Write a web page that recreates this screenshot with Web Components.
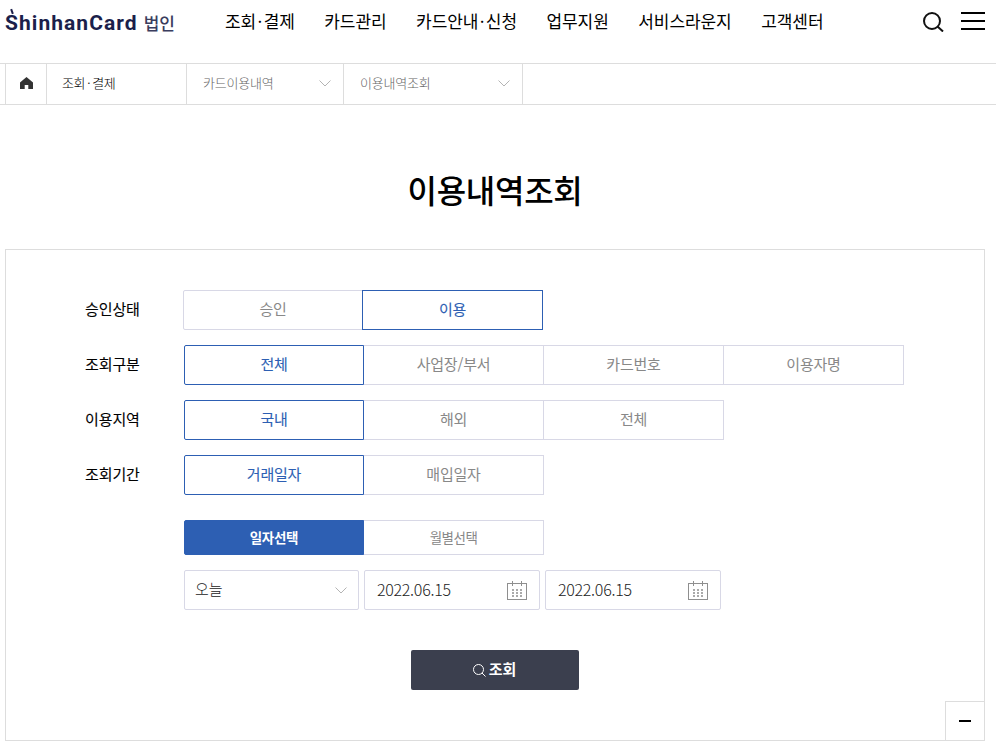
<!DOCTYPE html>
<html lang="ko"><head><meta charset="utf-8"><title>이용내역조회</title>
<style>
html,body{margin:0;padding:0;background:#fff;height:750px;overflow:hidden}
body{font-family:"Noto Sans CJK KR","Noto Sans",sans-serif;color:#000}
</style></head><body>
<app-header></app-header>
<crumb-bar></crumb-bar>
<page-title>이용내역조회</page-title>
<search-card></search-card>
<script>
function def(name,html,init){customElements.define(name,class extends HTMLElement{constructor(){super();const r=this.attachShadow({mode:"open"});r.innerHTML=typeof html==="function"?html(this):html;}connectedCallback(){init&&init(this)}})}
const FONT='"Noto Sans CJK KR","Noto Sans",sans-serif';
const chev='<svg width="12" height="7" viewBox="0 0 12 7" fill="none" stroke="#b4b4b4" stroke-width="1"><path d="M.5.5 6 6 11.5.5"/></svg>';
def("app-header",`<style>
:host{display:flex;height:63px;align-items:flex-start;border-bottom:1px solid #ddd;box-sizing:content-box;font-family:${FONT}}
.logo{display:flex;align-items:center;margin:9px 0 0 5px;width:220px;height:28px;position:relative;color:#1b1f4b}
.en{font:700 21px/28px Roboto,sans-serif;letter-spacing:1.05px}
.ko{font:500 17px/28px ${FONT};margin-left:6px;color:#3a3d5e;position:relative;top:0}
.acc{position:absolute;left:6px;top:0;width:2px;height:5px;background:#1b1f4b;transform:rotate(-20deg)}
nav{display:flex;gap:29.5px;margin-top:7px;font-size:17px;letter-spacing:-.07px;line-height:28px;white-space:nowrap}
.d{display:inline-block;width:7.5px;text-align:center}
.tools{margin-left:auto;display:flex;align-items:flex-start;margin-top:12px;margin-right:11px;gap:17px}
svg{display:block}
</style>
<div class="logo"><span class="acc"></span><span class="en">ShinhanCard</span><span class="ko">법인</span></div>
<nav><span>조회<span class="d">·</span>결제</span><span>카드관리</span><span>카드안내<span class="d">·</span>신청</span><span>업무지원</span><span>서비스라운지</span><span>고객센터</span></nav>
<div class="tools">
<svg width="21" height="20" viewBox="0 0 21 20" fill="none" stroke="#111" stroke-width="2"><circle cx="9" cy="9" r="8"/><path d="M14.5 14.5l5.5 5"/></svg>
<svg width="24" height="18" viewBox="0 0 24 18" fill="#000"><rect y="0" width="24" height="2"/><rect y="8" width="24" height="2"/><rect y="16" width="24" height="2"/></svg>
</div>`);
def("crumb-bar",`<style>
:host{display:flex;height:40px;border-bottom:1px solid #ddd;font-family:${FONT};font-size:13px;font-weight:300;letter-spacing:-.22px;color:#666}
.c{box-sizing:border-box;border-right:1px solid #ddd;display:flex;align-items:center;height:40px}
.c span{position:relative;top:-2px}
.c svg{position:relative;top:-1px}
.first{width:6px}
.home{width:41px;justify-content:center}
.a{width:140px;padding-left:15px;color:#000;letter-spacing:-.4px}
.d{display:inline-block;width:7px;text-align:center;top:0!important}
.s{width:157px;padding:0 12px 0 16px;justify-content:space-between}
.t{width:179px}
</style>
<div class="c first"></div>
<div class="c home"><svg width="13" height="12" viewBox="0 0 13 12" fill="#333"><path d="M6.5 0 13 5.4V12H8.3V8H4.7v4H0V5.4z"/></svg></div>
<div class="c a"><span>조회<span class="d">·</span>결제</span></div>
<div class="c s"><span>카드이용내역</span>${chev}</div>
<div class="c s t"><span>이용내역조회</span>${chev}</div>`);
def("page-title",`<style>
:host{display:block;text-align:center;padding-top:59px;height:85px;box-sizing:content-box;font:500 32px/50px ${FONT};letter-spacing:-.27px;color:#000;width:990px}
</style><slot></slot>`);
def("form-row",h=>`<style>
:host{display:flex;align-items:flex-start;margin-bottom:15px}
.l{width:99px;margin-left:79px;flex:none;font-size:15px;font-weight:400;line-height:38px;color:#000;letter-spacing:-.1px;-webkit-text-stroke:.1px #000}
</style><div class="l">${h.getAttribute("label")||""}</div><slot></slot>`);
def("seg-group",h=>{
 const sel=+(h.getAttribute("sel")||0),items=h.getAttribute("items").split("|"),w=+(h.getAttribute("w")||180),H=+(h.getAttribute("height")||40),fill=h.hasAttribute("fill");
 const off=+(h.getAttribute("off")||1);
 return `<style>
:host{display:flex;margin-left:${off}px;font-family:${FONT}}
div{box-sizing:border-box;width:${w}px;height:${H}px;display:flex;align-items:center;justify-content:center;border:1px solid #d8d8e6;margin-left:-1px;padding-bottom:${fill?2:4}px;font-size:15px;color:#888;letter-spacing:-.2px;background:#fff}
div:first-of-type{border-radius:2px 0 0 2px}
.on{border-color:#2d5fb3;color:#2d5fb3;font-weight:400;-webkit-text-stroke:.1px #2d5fb3;position:relative;z-index:1}
.fill{background:#2d5fb3;color:#fff;font-size:13.5px;font-weight:700;letter-spacing:-.3px;-webkit-text-stroke:0}
.m{font-size:13.5px;letter-spacing:-.5px}
</style>`+items.map((t,i)=>`<div class="${i===sel?(fill?"fill on":"on"):(fill?"m":"")}" style="${i>0?`width:${w+1}px`:""}">${t}</div>`).join("")});
const cal='<svg width="20" height="19" viewBox="0 0 20 19" fill="none" stroke="#8f8f8f"><rect x=".5" y="2.5" width="19" height="16"/><path d="M5.5 0v5M14.5 0v5"/><path d="M5 9h2M9 9h2M13 9h2M5 12h2M9 12h2M13 12h2M5 15h2M9 15h2M13 15h2" stroke-width="1.5"/></svg>';
def("date-field",h=>`<style>
:host{display:flex;box-sizing:border-box;width:176px;height:40px;border:1px solid #d8d8e6;border-radius:2px;align-items:center;justify-content:space-between;padding:0 12px 0 12px;font:300 16px ${FONT};letter-spacing:-.28px;color:#222}
span{position:relative;top:-1px}
</style><span><slot></slot></span>${cal}`);
def("period-select",`<style>
:host{display:flex;box-sizing:border-box;width:175px;height:40px;border:1px solid #d8d8e6;border-radius:2px;align-items:center;justify-content:space-between;padding:0 11px 0 10px;font:300 15px ${FONT};color:#222}
span{position:relative;top:-2px}
</style><span><slot></slot></span>${chev}`);
def("search-button",`<style>
:host{display:flex;width:168px;height:40px;margin:0 auto;align-items:center;justify-content:center;gap:3px;background:#3b3f4e;border-radius:2px;color:#fff;font:700 15px ${FONT}}
span{position:relative;top:-2px}
</style><svg width="13" height="13" viewBox="0 0 13 13" fill="none" stroke="#fff" stroke-width="1"><circle cx="5.5" cy="5.5" r="5"/><path d="M9 9l3.5 3.5"/></svg><span><slot></slot></span>`);
def("search-card",`<style>
:host{display:block;box-sizing:border-box;width:980px;height:492px;margin-left:5px;border:1px solid #ddd;padding-top:40px;position:relative;font-family:${FONT}}
.stack{margin-left:178px}
.dates{display:flex;gap:5px;margin:15px 0 0 0}
.btn{margin:40px 0 0 0;padding-right:1px}
.fold{position:absolute;right:0;bottom:0;box-sizing:border-box;width:39px;height:39px;border:1px solid #ddd;border-width:1px 0 0 1px;display:flex;align-items:center;justify-content:center}
.fold i{display:block;width:12px;height:2px;background:#000}
form-row[last]{margin-bottom:25px}
</style>
<form-row label="승인상태"><seg-group items="승인|이용" sel="1" off="0"></seg-group></form-row>
<form-row label="조회구분"><seg-group items="전체|사업장/부서|카드번호|이용자명"></seg-group></form-row>
<form-row label="이용지역"><seg-group items="국내|해외|전체"></seg-group></form-row>
<form-row label="조회기간" last><seg-group items="거래일자|매입일자"></seg-group></form-row>
<div class="stack">
<seg-group items="일자선택|월별선택" height="35" fill></seg-group>
<div class="dates"><period-select>오늘</period-select><date-field>2022.06.15</date-field><date-field>2022.06.15</date-field></div>
</div>
<div class="btn"><search-button>조회</search-button></div>
<div class="fold"><i></i></div>`);
</script>
</body></html>
